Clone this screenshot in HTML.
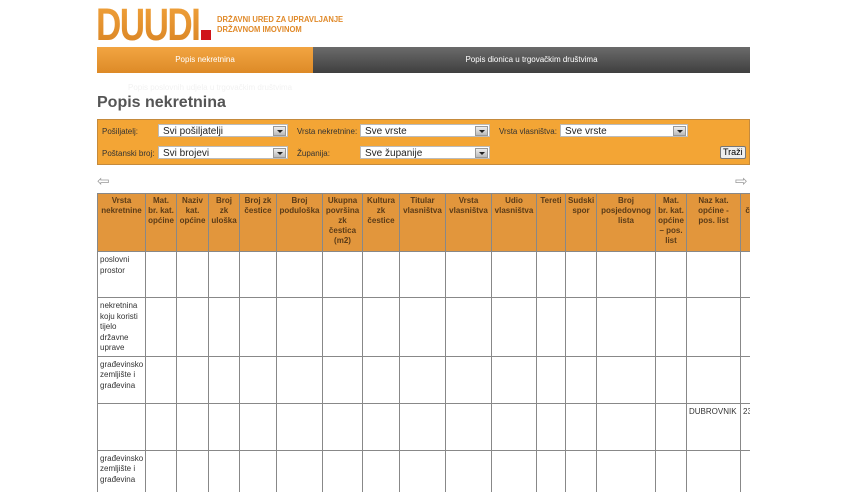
<!DOCTYPE html>
<html><head><meta charset="utf-8"><style>
body{margin:0;background:#fff;font-family:"Liberation Sans",sans-serif;width:848px;height:492px;overflow:hidden;position:relative}
.logo{position:absolute;left:96px;top:3px;font-weight:bold;font-size:45px;background:linear-gradient(#f0a13a,#d98424);-webkit-background-clip:text;background-clip:text;color:transparent;letter-spacing:-2px;line-height:44px;transform:scaleX(0.78);transform-origin:left}
.red{position:absolute;left:201px;top:30px;width:10px;height:10px;background:#d0141b}
.lt{position:absolute;left:217px;top:15px;font-size:8px;font-weight:bold;color:#e08a2a;line-height:10px;transform:scaleX(0.95);transform-origin:left}
.nav{position:absolute;top:47px;left:97px;width:653px;height:26px;font-size:8px;color:#fff;line-height:26px}
.t1{position:absolute;left:0;width:216px;height:26px;background:linear-gradient(#f2a542,#dd8a27);text-align:center}
.t2{position:absolute;left:216px;width:437px;height:26px;background:linear-gradient(#6b6b6b,#3f3f3f);text-align:center}
.ghost{position:absolute;left:128px;top:83px;font-size:8px;color:#f2f2f2}
h1{position:absolute;left:97px;top:94px;margin:0;font-size:16px;color:#555;font-weight:bold}
.filt{position:absolute;left:97px;top:119px;width:651px;height:44px;background:#f3a535;border:1px solid #c58a3c}
.lb{position:absolute;font-size:8px;color:#333}
.sel{position:absolute;height:13px;background:#fff;border:1px solid #bbb;font-size:10px;color:#222;line-height:13px;padding-left:4px;box-sizing:border-box}
.sel i{position:absolute;right:1px;top:1px;width:13px;height:10px;background:linear-gradient(#eee,#bbb);border:1px solid #999;box-sizing:border-box}
.sel i:after{content:"";position:absolute;left:3px;top:3px;border:3px solid transparent;border-top:3px solid #222}
.btn{position:absolute;left:622px;top:26px;font-size:9px;border:1px solid #777;border-radius:2px;background:#eee;padding:0 2px;line-height:11px}
.arr{position:absolute;top:172px;font-size:15px;color:#999}
.wrap{position:absolute;left:97px;top:193px;width:653px;height:299px;overflow:hidden}
table{border-collapse:collapse;table-layout:fixed;width:760px}
td,th{border:1px solid #888;vertical-align:top;font-size:8px;padding:2px 2px;overflow:hidden}
th{background:#e2963c;color:#5a3b18;font-weight:bold;text-align:center;line-height:10px}
td{color:#333;line-height:10.5px;padding-top:3px}
</style></head><body>
<div class="logo">DUUDI</div><div class="red"></div>
<div class="lt">DRŽAVNI URED ZA UPRAVLJANJE<br>DRŽAVNOM IMOVINOM</div>
<div class="nav"><div class="t1">Popis nekretnina</div><div class="t2">Popis dionica u trgovačkim društvima</div></div>
<div class="ghost">Popis poslovnih udjela u trgovačkim društvima</div>
<h1>Popis nekretnina</h1>
<div class="filt">
<div class="lb" style="left:4px;top:7px">Pošiljatelj:</div>
<div class="sel" style="left:60px;top:4px;width:130px">Svi pošiljatelji<i></i></div>
<div class="lb" style="left:199px;top:7px">Vrsta nekretnine:</div>
<div class="sel" style="left:262px;top:4px;width:130px">Sve vrste<i></i></div>
<div class="lb" style="left:401px;top:7px">Vrsta vlasništva:</div>
<div class="sel" style="left:462px;top:4px;width:128px">Sve vrste<i></i></div>
<div class="lb" style="left:4px;top:29px">Poštanski broj:</div>
<div class="sel" style="left:60px;top:26px;width:130px">Svi brojevi<i></i></div>
<div class="lb" style="left:199px;top:29px">Županija:</div>
<div class="sel" style="left:262px;top:26px;width:130px">Sve županije<i></i></div>
<div class="btn">Traži</div>
</div>
<div class="arr" style="left:97px">⇦</div><div class="arr" style="left:735px">⇨</div>
<div class="wrap"><table>
<colgroup><col style="width:48px"><col style="width:31px"><col style="width:32px"><col style="width:31px"><col style="width:37px"><col style="width:46px"><col style="width:40px"><col style="width:37px"><col style="width:46px"><col style="width:46px"><col style="width:45px"><col style="width:29px"><col style="width:31px"><col style="width:59px"><col style="width:31px"><col style="width:54px"><col style="width:40px"><col></colgroup>
<tr style="height:58px"><th>Vrsta nekretnine</th><th>Mat. br. kat. općine</th><th>Naziv kat. općine</th><th>Broj zk uloška</th><th>Broj zk čestice</th><th>Broj poduloška</th><th>Ukupna površina zk čestica (m2)</th><th>Kultura zk čestice</th><th>Titular vlasništva</th><th>Vrsta vlasništva</th><th>Udio vlasništva</th><th>Tereti</th><th>Sudski spor</th><th>Broj posjedovnog lista</th><th>Mat. br. kat. općine – pos. list</th><th>Naz kat. općine - pos. list</th><th>Broj čest. - p</th><th></th></tr>
<tr style="height:46px"><td>poslovni prostor</td><td></td><td></td><td></td><td></td><td></td><td></td><td></td><td></td><td></td><td></td><td></td><td></td><td></td><td></td><td></td><td></td><td></td></tr>
<tr style="height:58px"><td>nekretnina koju koristi tijelo državne uprave</td><td></td><td></td><td></td><td></td><td></td><td></td><td></td><td></td><td></td><td></td><td></td><td></td><td></td><td></td><td></td><td></td><td></td></tr>
<tr style="height:47px"><td>građevinsko zemljište i građevina</td><td></td><td></td><td></td><td></td><td></td><td></td><td></td><td></td><td></td><td></td><td></td><td></td><td></td><td></td><td></td><td></td><td></td></tr>
<tr style="height:47px"><td></td><td></td><td></td><td></td><td></td><td></td><td></td><td></td><td></td><td></td><td></td><td></td><td></td><td></td><td></td><td>DUBROVNIK</td><td>23</td><td></td></tr>
<tr style="height:47px"><td>građevinsko zemljište i građevina</td><td></td><td></td><td></td><td></td><td></td><td></td><td></td><td></td><td></td><td></td><td></td><td></td><td></td><td></td><td></td><td></td><td></td></tr>
</table></div>
</body></html>
